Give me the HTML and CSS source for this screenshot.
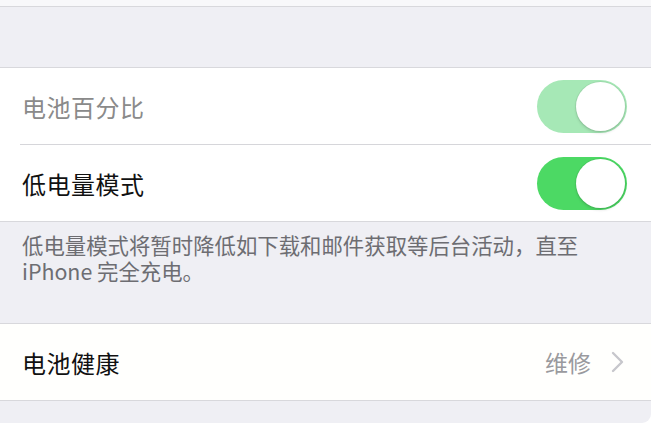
FILE: index.html
```html
<!DOCTYPE html>
<html lang="zh">
<head>
<meta charset="utf-8">
<link rel="stylesheet" href="styles.css">
</head>
<body>
<div class="screen">
  <div class="top-strip"></div>
  <div class="spacer spacer-top"></div>
  <div class="group">
    <div class="row">
      <span class="label label-disabled">电池百分比</span>
      <span class="toggle toggle-disabled"><span class="knob"></span></span>
    </div>
    <div class="sep"></div>
    <div class="row">
      <span class="label">低电量模式</span>
      <span class="toggle"><span class="knob"></span></span>
    </div>
  </div>
  <div class="footer">低电量模式将暂时降低如下载和邮件获取等后台活动，直至<br>iPhone 完全充电。</div>
  <div class="group">
    <div class="row row-link">
      <span class="label">电池健康</span>
      <span class="detail">维修</span>
      <svg class="chevron" width="14" height="22" viewBox="0 0 14 22"><path d="M2 2 L11 11 L2 20" fill="none" stroke="#c7c7cc" stroke-width="2.4" stroke-linecap="round" stroke-linejoin="round"/></svg>
    </div>
  </div>
  <div class="spacer spacer-bottom"></div>
</div>
</body>
</html>
```
FILE: styles.css
```css
html, body {
  margin: 0;
  padding: 0;
  background: #ffffff;
}
body {
  font-family: "Noto Sans CJK SC", "Noto Sans", sans-serif;
  width: 658px;
  height: 423px;
  overflow: hidden;
}
.screen {
  width: 651px;
  height: 423px;
  background: #efeff4;
  border-bottom-right-radius: 9px;
  overflow: hidden;
  display: flex;
  flex-direction: column;
}
.top-strip {
  height: 6px;
  background: #f8f8fa;
  border-bottom: 1.5px solid #d8d8dc;
}
.spacer-top {
  height: 60px;
}
.group {
  background: #ffffff;
  border-top: 1.5px solid #d8d8dc;
  border-bottom: 1.5px solid #d8d8dc;
}
.row {
  height: 76px;
  display: flex;
  align-items: center;
  padding: 0 24px 0 22px;
}
.sep {
  height: 1px;
  background: #d6d6da;
  margin-left: 20px;
}
.label {
  font-size: 24px;
  color: #111111;
  flex: 1;
  letter-spacing: 0.5px;
}
.label-disabled {
  color: #8a8a8a;
}
.toggle {
  width: 90px;
  height: 53px;
  border-radius: 27px;
  background: #4cd964;
  display: flex;
  justify-content: flex-end;
  align-items: center;
  padding: 2px;
  box-sizing: border-box;
}
.toggle-disabled {
  background: #a6e8b6;
}
.knob {
  width: 49px;
  height: 49px;
  border-radius: 50%;
  background: #ffffff;
  box-shadow: 0 0 0 1px rgba(0,0,0,0.06), 0 2px 3px rgba(0,0,0,0.12);
}
.footer {
  height: 101px;
  padding: 10px 22px 0;
  box-sizing: border-box;
  font-size: 21.4px;
  line-height: 26px;
  color: #6d6d72;
}
.row-link {
  height: 76px;
  background: #fffffd;
  padding-right: 26px;
}
.detail {
  font-size: 23px;
  color: #9a9a9e;
  margin-right: 20px;
}
.chevron {
  display: block;
}
.spacer-bottom {
  flex: 1;
}
```
